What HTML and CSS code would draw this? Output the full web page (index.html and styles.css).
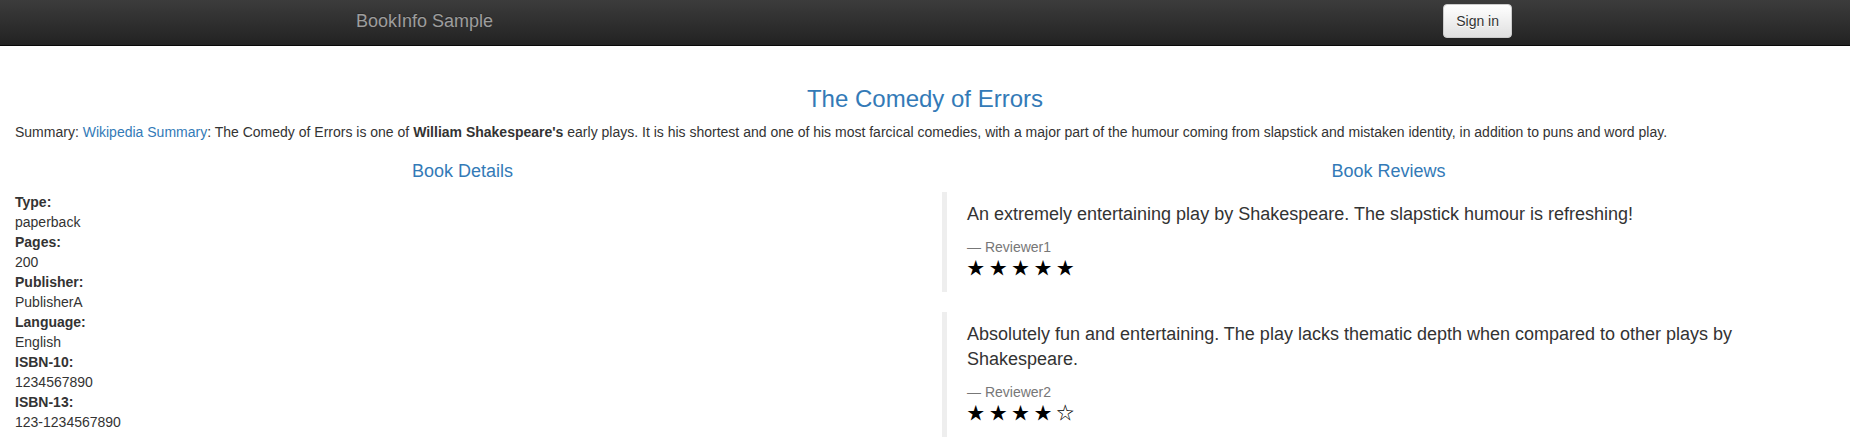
FILE: index.html
```html
<!DOCTYPE html>
<html lang="en">
<head>
<meta charset="utf-8">
<title>Simple Bookstore App</title>
<link rel="stylesheet" href="styles.css">
</head>
<body>
<nav class="navbar">
  <div class="nav-container">
    <a class="brand" href="#">BookInfo Sample</a>
    <button class="btn-signin" type="button">Sign in</button>
  </div>
</nav>
<main class="page">
  <h3 class="title">The Comedy of Errors</h3>
  <p class="summary">Summary: <a href="#">Wikipedia Summary</a>: The Comedy of Errors is one of <b>William Shakespeare's</b> early plays. It is his shortest and one of his most farcical comedies, with a major part of the humour coming from slapstick and mistaken identity, in addition to puns and word play.</p>
  <div class="row">
    <section class="col col-left">
      <h4 class="col-title">Book Details</h4>
      <dl class="details">
        <dt>Type:</dt><dd>paperback</dd>
        <dt>Pages:</dt><dd>200</dd>
        <dt>Publisher:</dt><dd>PublisherA</dd>
        <dt>Language:</dt><dd>English</dd>
        <dt>ISBN-10:</dt><dd>1234567890</dd>
        <dt>ISBN-13:</dt><dd>123-1234567890</dd>
      </dl>
    </section>
    <section class="col col-right">
      <h4 class="col-title">Book Reviews</h4>
      <blockquote class="review">
        <p>An extremely entertaining play by Shakespeare. The slapstick humour is refreshing!</p>
        <small>Reviewer1</small>
        <div class="stars"><span class="star">★</span> <span class="star">★</span> <span class="star">★</span> <span class="star">★</span> <span class="star">★</span></div>
      </blockquote>
      <blockquote class="review">
        <p>Absolutely fun and entertaining. The play lacks thematic depth when compared to other plays by Shakespeare.</p>
        <small>Reviewer2</small>
        <div class="stars"><span class="star">★</span> <span class="star">★</span> <span class="star">★</span> <span class="star">★</span> <span class="star">☆</span></div>
      </blockquote>
    </section>
  </div>
</main>
</body>
</html>
```
FILE: styles.css
```css
* { box-sizing: border-box; }
html, body { margin: 0; padding: 0; }
body {
  font-family: "Liberation Sans", Arial, Helvetica, sans-serif;
  font-size: 14px;
  line-height: 1.42857143;
  color: #333;
  background: #fff;
}
a { color: #337ab7; text-decoration: none; }

.navbar {
  height: 46px;
  background-image: linear-gradient(to bottom, #3c3c3c 0, #222 100%);
  border-bottom: 1px solid #080808;
  margin-bottom: 20px;
}
.nav-container {
  width: 1170px;
  margin: 0 auto;
  display: flex;
  justify-content: space-between;
  align-items: flex-start;
}
.brand {
  display: block;
  padding: 11px 15px 11px 16px;
  font-size: 18px;
  line-height: 20px;
  color: #9d9d9d;
  text-shadow: 0 -1px 0 rgba(0,0,0,.25);
}
.btn-signin {
  margin-top: 4px;
  margin-right: -2px;
  padding: 6px 12px;
  font-family: inherit;
  font-size: 14px;
  line-height: 20px;
  color: #333;
  background-image: linear-gradient(to bottom, #fff 0, #e0e0e0 100%);
  border: 1px solid #ccc;
  border-radius: 4px;
  text-shadow: 0 1px 0 #fff;
  box-shadow: inset 0 1px 0 rgba(255,255,255,.15), 0 1px 1px rgba(0,0,0,.075);
}

.page { display: flow-root; padding: 0 15px; }
.title {
  margin: 20px 0 10px;
  font-size: 24px;
  font-weight: 500;
  line-height: 1.1;
  text-align: center;
  color: #337ab7;
}
.summary { margin: 0 0 10px; }

.row {
  display: grid;
  grid-template-columns: 1fr 1fr;
  margin: 0 -15px;
}
.col { padding: 0 15px; min-width: 0; }
.col-right { padding-left: 17px; }
.col-title {
  margin: 10px 0;
  font-size: 18px;
  font-weight: 500;
  line-height: 1.1;
  text-align: center;
  color: #337ab7;
}
.details { margin: 0 0 20px; }
.details dt { font-weight: 700; }
.details dd { margin: 0; }

.review {
  margin: 0 0 20px;
  padding: 10px 20px;
  font-size: 17.5px;
  border-left: 5px solid #eee;
}
.review p { margin: 0 0 10px; font-size: 18px; line-height: 25px; }
.review small {
  display: block;
  font-size: 14px;
  line-height: 20px;
  color: #777;
}
.review small::before { content: "\2014 \00A0"; }
.stars { color: #000; line-height: 20px; height: 25px; }
.star { font-family: "Noto Sans CJK JP", "DejaVu Sans", sans-serif; }
```
